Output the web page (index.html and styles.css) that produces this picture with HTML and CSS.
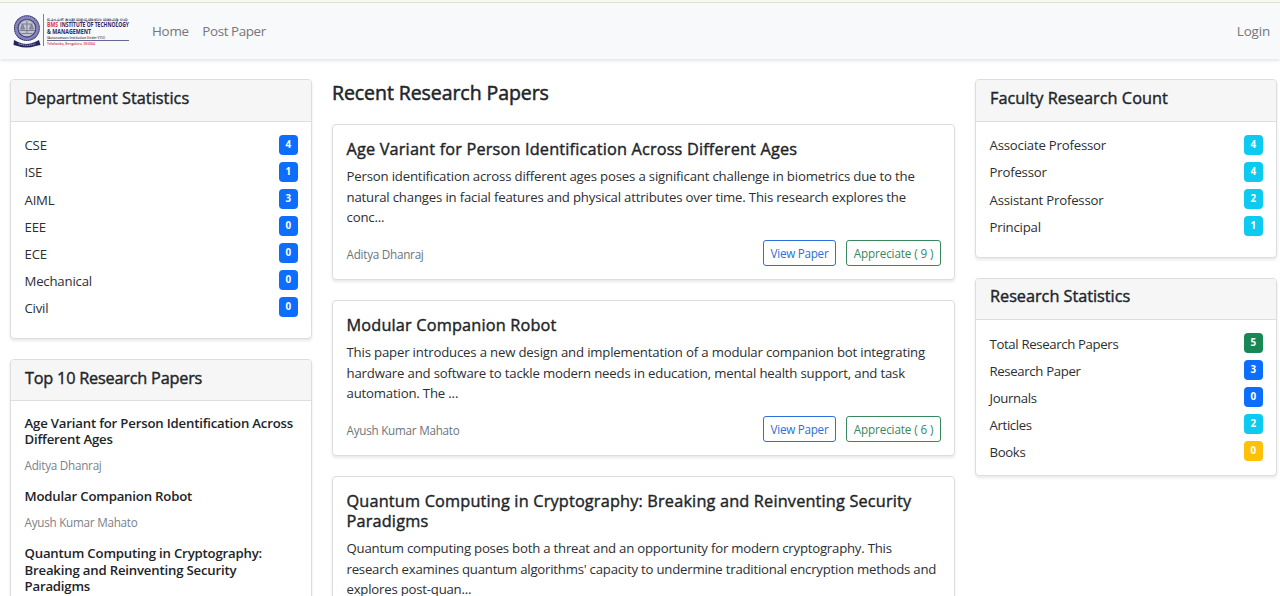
FILE: index.html
```html
<!DOCTYPE html>
<html lang="en">
<head>
<meta charset="utf-8">
<title>Research Papers</title>
<link rel="stylesheet" href="styles.css">
</head>
<body>
<div class="top-edge"></div>
<nav class="navbar">
  <svg class="logo" width="119" height="34" viewBox="0 0 119 34" role="img" aria-label="BMS Institute of Technology &amp; Management">
    <path d="M1 26l4 2q8 4 17 0l4-2 1.500 5-5 1q-9 3-18 0l-4-1z" fill="#24265b"/>
    <circle cx="13.900" cy="14.200" r="12.900" fill="#29295f"/>
    <circle cx="13.900" cy="14.200" r="10.600" fill="none" stroke="#8582c0" stroke-width="2.600"/>
    <circle cx="13.900" cy="14.200" r="12.200" fill="none" stroke="#b5b2da" stroke-width=".8" stroke-dasharray="1 1.200"/>
    <circle cx="13.900" cy="14.200" r="8.600" fill="#c3c5d3" stroke="#45456f" stroke-width=".7"/>
    <path d="M13.900 7v12M8.500 10h11M6.500 16.500h15M8.500 19.500h11M9.500 10l-2 5h4zM18.500 10l-2 5h4z" stroke="#73758b" stroke-width=".9" fill="#8f91a5"/>
    <path d="M5.500 29.700q8.500 3 17 0" stroke="#b9b9d2" stroke-width="1" fill="none" stroke-dasharray="1.500 .6"/>
    <path d="M30.500 0v32" stroke="#d35e68" stroke-width="1"/>
    <text class="logo-kn" x="34" y="6.600" textLength="81" lengthAdjust="spacingAndGlyphs">ಬಿ.ಎಂ.ಎಸ್. ತಾಂತ್ರಿಕ ಮತ್ತು ವ್ಯವಸ್ಥಾಪನಾ ಮಹಾವಿದ್ಯಾಲಯ</text>
    <text class="logo-name logo-red" x="34" y="13" textLength="11" lengthAdjust="spacingAndGlyphs">BMS</text>
    <text class="logo-name" x="47" y="13" textLength="69" lengthAdjust="spacingAndGlyphs">INSTITUTE OF TECHNOLOGY</text>
    <text class="logo-name" x="34" y="19.800" textLength="44" lengthAdjust="spacingAndGlyphs">&amp; MANAGEMENT</text>
    <text class="logo-sub" x="34" y="24.600" textLength="58" lengthAdjust="spacingAndGlyphs">(Autonomous Institution Under VTU)</text>
    <path d="M34 26.500h82" stroke="#55558c" stroke-width=".9"/>
    <text class="logo-sub logo-red" x="34" y="31.200" textLength="48" lengthAdjust="spacingAndGlyphs">Yelahanka, Bengaluru -560064</text>
  </svg>
  <a class="nav-link">Home</a>
  <a class="nav-link">Post Paper</a>
  <a class="nav-link nav-login">Login</a>
</nav>
<main class="layout">
  <aside class="side">
    <section class="card">
      <h5 class="card-header">Department Statistics</h5>
      <ul class="stats">
        <li><span>CSE</span><b class="badge">4</b></li>
        <li><span>ISE</span><b class="badge">1</b></li>
        <li><span>AIML</span><b class="badge">3</b></li>
        <li><span>EEE</span><b class="badge">0</b></li>
        <li><span>ECE</span><b class="badge">0</b></li>
        <li><span>Mechanical</span><b class="badge">0</b></li>
        <li><span>Civil</span><b class="badge">0</b></li>
      </ul>
    </section>
    <section class="card">
      <h5 class="card-header narrow">Top 10 Research Papers</h5>
      <div class="top-list">
        <h6 class="top-title">Age Variant for Person Identification Across<br>Different Ages</h6>
        <p class="top-author">Aditya Dhanraj</p>
        <h6 class="top-title">Modular Companion Robot</h6>
        <p class="top-author">Ayush Kumar Mahato</p>
        <h6 class="top-title">Quantum Computing in Cryptography:<br>Breaking and Reinventing Security<br>Paradigms</h6>
      </div>
    </section>
  </aside>
  <section class="feed">
    <h4 class="feed-title">Recent Research Papers</h4>
    <article class="card paper">
      <h5 class="paper-title">Age Variant for Person Identification Across Different Ages</h5>
      <p class="paper-text">Person identification across different ages poses a significant challenge in biometrics due to the<br>natural changes in facial features and physical attributes over time. This research explores the<br>conc...</p>
      <div class="paper-foot"><span class="author">Aditya Dhanraj</span><a class="btn btn-view">View Paper</a><a class="btn btn-like">Appreciate ( 9 )</a></div>
    </article>
    <article class="card paper">
      <h5 class="paper-title">Modular Companion Robot</h5>
      <p class="paper-text">This paper introduces a new design and implementation of a modular companion bot integrating<br>hardware and software to tackle modern needs in education, mental health support, and task<br>automation. The ...</p>
      <div class="paper-foot"><span class="author">Ayush Kumar Mahato</span><a class="btn btn-view">View Paper</a><a class="btn btn-like">Appreciate ( 6 )</a></div>
    </article>
    <article class="card paper">
      <h5 class="paper-title">Quantum Computing in Cryptography: Breaking and Reinventing Security<br>Paradigms</h5>
      <p class="paper-text">Quantum computing poses both a threat and an opportunity for modern cryptography. This<br>research examines quantum algorithms' capacity to undermine traditional encryption methods and<br>explores post-quan...</p>
    </article>
  </section>
  <aside class="side">
    <section class="card">
      <h5 class="card-header">Faculty Research Count</h5>
      <ul class="stats">
        <li><span>Associate Professor</span><b class="badge info">4</b></li>
        <li><span>Professor</span><b class="badge info">4</b></li>
        <li><span>Assistant Professor</span><b class="badge info">2</b></li>
        <li><span>Principal</span><b class="badge info">1</b></li>
      </ul>
    </section>
    <section class="card">
      <h5 class="card-header lifted">Research Statistics</h5>
      <ul class="stats stats-tight">
        <li><span>Total Research Papers</span><b class="badge success">5</b></li>
        <li><span>Research Paper</span><b class="badge">3</b></li>
        <li><span>Journals</span><b class="badge">0</b></li>
        <li><span>Articles</span><b class="badge info">2</b></li>
        <li><span>Books</span><b class="badge warning">0</b></li>
      </ul>
    </section>
  </aside>
</main>
</body>
</html>
```
FILE: styles.css
```css
* { box-sizing: border-box; margin: 0; padding: 0; }
html { height: 100%; overflow: hidden; }
body {
  height: 596px;
  overflow: hidden;
  background: #fff;
  color: #212529;
  font: 13.2px/20.33px "Open Sans", "Noto Sans", sans-serif;
  letter-spacing: -.2px;
  white-space: nowrap;
}
.top-edge { height: 3px; border-bottom: 1px solid #dbe5d3; background: #f6fbee; }
.navbar {
  display: flex;
  align-items: center;
  height: 56px;
  padding: 0 10px 0 13px;
  background: #f8f9fb;
  box-shadow: 0 2px 3px rgba(0, 0, 0, .1);
}
.logo { margin-right: 20px; letter-spacing: 0; }
.logo-kn { font: 600 4.6px "Noto Sans", sans-serif; fill: #55556a; }
.logo-name { font: 700 6.3px "Open Sans", sans-serif; fill: #2b2a68; }
.logo-sub { font: 600 3.8px "Open Sans", sans-serif; fill: #3d3d50; }
.logo-red { fill: #d9344b; }
.nav-link { margin-right: 13.5px; color: #75777a; font-size: 13.4px; letter-spacing: -.4px; }
.nav-login { margin: 0 0 0 auto; letter-spacing: -.15px; }
.nav-link:first-of-type { letter-spacing: -.25px; }
.layout {
  display: grid;
  grid-template-columns: 302px 623px 302px;
  column-gap: 20px;
  padding: 20px 0 0 10px;
}
.card {
  margin-bottom: 20px;
  border: 1px solid #dcdddd;
  border-radius: 4px;
  background: #fff;
  box-shadow: 0 2px 3px rgba(0, 0, 0, .09);
}
.card-header {
  height: 41.5px;
  padding: 8px 14px 0;
  border-bottom: 1px solid #dedede;
  border-radius: 3px 3px 0 0;
  background: #f6f6f6;
  font-size: 16.3px;
  font-weight: 400;
  letter-spacing: .03px;
  -webkit-text-stroke: .4px #212529;
}
.narrow { letter-spacing: -.22px; }
.lifted { height: 41px; padding-top: 7.3px; letter-spacing: -.03px; }
.stats { padding: 13.2px 13px 13.6px 13.5px; color: #2b2f33; list-style: none; }
.stats-tight { padding-bottom: 7px; letter-spacing: -.35px; }
.stats li { display: flex; justify-content: space-between; height: 27.1px; }
.stats span { padding-top: .7px; }
.badge {
  width: 19.4px;
  height: 20px;
  border-radius: 4px;
  background: #0d6efd;
  color: #fff;
  font-size: 9.8px;
  font-weight: 700;
  line-height: 19px;
  letter-spacing: 0;
  text-align: center;
}
.info { background: #0dcaf0; }
.success { background: #198754; }
.warning { background: #ffc107; }
.top-list { padding: 13.6px 13.5px; }
.top-title { font-size: 13.2px; font-weight: 600; line-height: 16.26px; letter-spacing: -.19px; }
.top-author { margin: 7px 0 13.4px; color: #7b8288; font-size: 11.7px; letter-spacing: -.25px; }
.feed-title {
  height: 45px;
  padding-top: 4px;
  font-size: 19.5px;
  font-weight: 400;
  letter-spacing: -.07px;
  -webkit-text-stroke: .5px #212529;
}
.paper { margin-bottom: 19.9px; padding: 14.3px 13px 13.2px 13.5px; }
.paper-title {
  margin-bottom: 6.7px;
  font-size: 16.3px;
  font-weight: 400;
  letter-spacing: .17px;
  -webkit-text-stroke: .4px #212529;
}
.paper-text { color: #2b2f33; letter-spacing: -.18px; }
.paper + .paper + .paper .paper-text { letter-spacing: -.22px; }
.paper-foot { display: flex; align-items: center; margin-top: 12.5px; height: 26px; }
.author { margin-right: auto; padding-top: 2.5px; color: #6c757d; font-size: 11.7px; letter-spacing: -.25px; }
.btn {
  height: 26px;
  margin-left: 10px;
  border: 1px solid;
  border-radius: 3px;
  font-size: 11.7px;
  line-height: 25px;
  text-align: center;
}
.btn-view { width: 73px; color: #2b70dc; letter-spacing: -.28px; }
.btn-like { width: 95px; color: #38885e; letter-spacing: -.12px; }
```
